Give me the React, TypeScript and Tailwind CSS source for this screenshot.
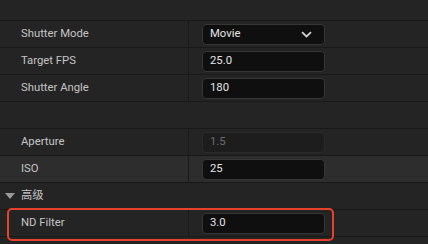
import React from "react";

type Row = { label: string; value: string; dropdown?: boolean; disabled?: boolean; hover?: boolean };

const Field: React.FC<{ row: Row }> = ({ row }) => (
  <div
    className={`flex h-[27px] border-b border-[#191919] ${row.hover ? "bg-[#2d2d2d]" : "bg-[#242424]"}`}
  >
    <div className="flex w-[189px] items-center border-r border-[#191919] pl-[21px] text-[#c4c4c4]">
      {row.label}
    </div>
    <div className="flex items-center pl-[13px]">
      <div
        className={`flex h-[21px] w-[123px] items-center justify-between rounded-[4px] border pl-[7px] pr-[12px] ${
          row.disabled
            ? "border-[#2a2a2a] bg-[#1d1d1d] text-[#6c6c6c]"
            : "border-[#363636] bg-[#0f0f0f] text-[#e4e4e4]"
        }`}
      >
        <span>{row.value}</span>
        {row.dropdown && (
          <svg width="11" height="7" viewBox="0 0 11 7" fill="none">
            <path d="M1 1.2 L5.5 5.5 L10 1.2" stroke="#cfcfcf" strokeWidth="1.8" />
          </svg>
        )}
      </div>
    </div>
  </div>
);

const Blank: React.FC = () => <div className="h-[27px] border-b border-[#191919] bg-[#242424]" />;

export default function App() {
  return (
    <div
      className="relative h-[244px] w-[428px] overflow-hidden bg-[#242424] text-[11.3px]"
      style={{ fontFamily: "Roboto, 'Noto Sans CJK SC', sans-serif" }}
    >
      <div className="h-[21px] border-b border-[#191919]" />
      <Field row={{ label: "Shutter Mode", value: "Movie", dropdown: true }} />
      <Field row={{ label: "Target FPS", value: "25.0" }} />
      <Field row={{ label: "Shutter Angle", value: "180" }} />
      <Blank />
      <Field row={{ label: "Aperture", value: "1.5", disabled: true }} />
      <Field row={{ label: "ISO", value: "25", hover: true }} />
      <div className="flex h-[27px] items-center border-b border-[#191919] pl-[5px] text-[#c4c4c4]">
        <svg width="10" height="7" viewBox="0 0 10 7" className="mr-[6px]">
          <path d="M0 0 H10 L5 6 Z" fill="#9a9a9a" />
        </svg>
        高级
      </div>
      <Field row={{ label: "ND Filter", value: "3.0" }} />
      <Blank />
      <div className="absolute left-[7px] top-[208px] h-[33px] w-[327px] rounded-[5px] border-2 border-[#e8402a]" />
    </div>
  );
}
